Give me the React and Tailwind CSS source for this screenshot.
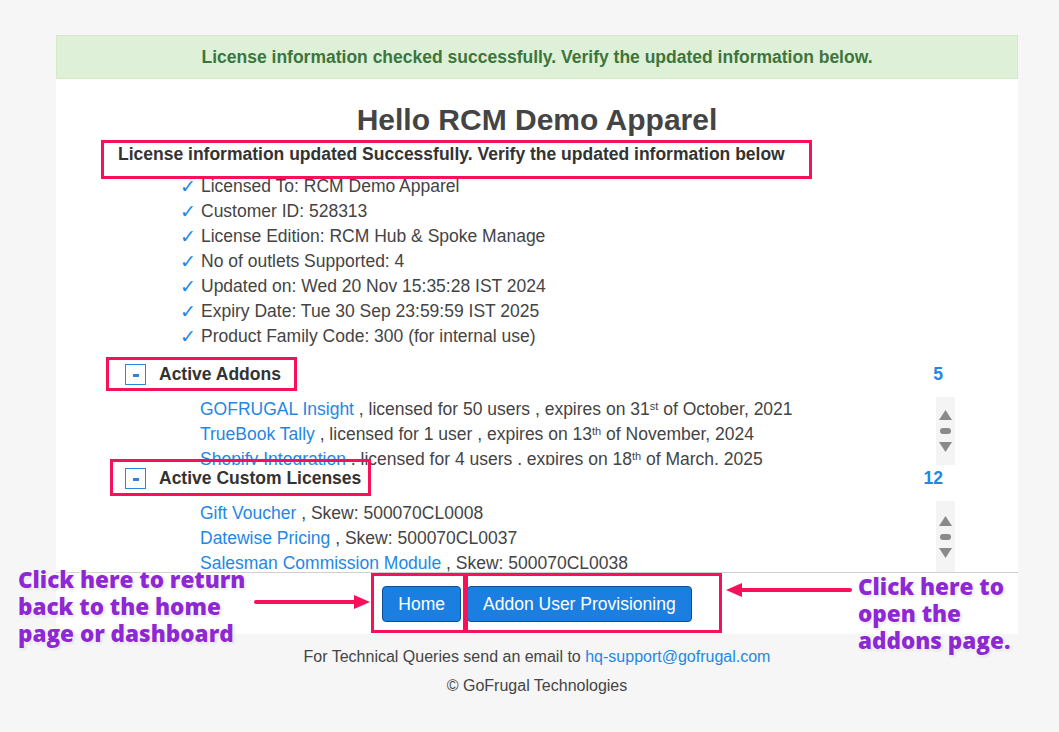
import React from "react";

const details = [
  "Licensed To: RCM Demo Apparel",
  "Customer ID: 528313",
  "License Edition: RCM Hub & Spoke Manage",
  "No of outlets Supported: 4",
  "Updated on: Wed 20 Nov 15:35:28 IST 2024",
  "Expiry Date: Tue 30 Sep 23:59:59 IST 2025",
  "Product Family Code: 300 (for internal use)",
];

const addons = [
  { name: "GOFRUGAL Insight", users: "50 users", day: "31", sup: "st", rest: "of October, 2021" },
  { name: "TrueBook Tally", users: "1 user", day: "13", sup: "th", rest: "of November, 2024" },
  { name: "Shopify Integration", users: "4 users", day: "18", sup: "th", rest: "of March, 2025" },
  { name: "WhatsApp Integration", users: "4 users", day: "18", sup: "th", rest: "of March, 2025" },
  { name: "Loyalty Manager", users: "4 users", day: "18", sup: "th", rest: "of March, 2025" },
];

const customLicenses = [
  { name: "Gift Voucher", skew: "500070CL0008" },
  { name: "Datewise Pricing", skew: "500070CL0037" },
  { name: "Salesman Commission Module", skew: "500070CL0038" },
  { name: "Scheme Management", skew: "500070CL0041" },
];

function ScrollStub() {
  return (
    <div className="flex h-full w-[19px] flex-col items-center justify-center gap-[8px] bg-[#f4f4f4]">
      <svg width="13" height="10" viewBox="0 0 13 10">
        <path d="M6.5 0 L13 10 L0 10 Z" fill="#8a8a8a" />
      </svg>
      <div className="h-[6px] w-[11px] rounded-full bg-[#8a8a8a]" />
      <svg width="13" height="10" viewBox="0 0 13 10">
        <path d="M0 0 L13 0 L6.5 10 Z" fill="#8a8a8a" />
      </svg>
    </div>
  );
}

function SectionHeader({ title, count, className }) {
  return (
    <div className={`flex items-center justify-between pl-[69px] pr-[75px] ${className}`}>
      <div className="flex items-center gap-[13px]">
        <span className="flex h-[21px] w-[21px] items-center justify-center border border-[#2a86e0]">
          <span className="mt-[2px] h-[3px] w-[6px] bg-[#2a86e0]" />
        </span>
        <span className="text-[17.5px] font-bold text-[#333]">{title}</span>
      </div>
      <span className="text-[17.5px] font-bold text-[#1f87e5]">{count}</span>
    </div>
  );
}

export default function App() {
  return (
    <div
      className="relative min-h-screen bg-[#f6f6f6] pt-[35px] text-[#444]"
      style={{ fontFamily: '"Liberation Sans", Arial, sans-serif' }}
    >
      <div className="ml-[56px] w-[962px]">
        <div className="flex h-[44px] items-center justify-center border border-[#d6e9c6] bg-[#dff0d8] text-[17.5px] font-bold text-[#3c763d]">
          License information checked successfully. Verify the updated information below.
        </div>

        <div className="bg-white">
          <h1 className="pt-[24px] text-center text-[30px] font-bold leading-[34px] text-[#444]">
            Hello RCM Demo Apparel
          </h1>
          <p className="mt-[5px] pl-[62px] text-[17.5px] font-bold leading-[25px] text-[#333]">
            License information updated Successfully. Verify the updated information below
          </p>

          <ul className="mt-[7px] pl-[124px] text-[17.5px] leading-[25px]">
            {details.map((d) => (
              <li key={d} className="flex">
                <span
                  className="w-[21px] text-[#1f87e5]"
                  style={{ fontFamily: '"DejaVu Sans", sans-serif', fontSize: "19px" }}
                >
                  ✓
                </span>
                <span>{d}</span>
              </li>
            ))}
          </ul>

          <SectionHeader title="Active Addons" count="5" className="mt-[10px] h-[30px]" />
          <div className="mt-[8px] flex h-[68px] pr-[63px]">
            <div className="flex-1 overflow-hidden pl-[144px] text-[17.5px] leading-[25px]">
              {addons.map((a) => (
                <div key={a.name} className="whitespace-nowrap">
                  <span className="text-[#1f87e5]">{a.name}</span> , licensed for {a.users} , expires on {a.day}
                  <sup className="text-[11px]">{a.sup}</sup> {a.rest}
                </div>
              ))}
            </div>
            <ScrollStub />
          </div>

          <SectionHeader title="Active Custom Licenses" count="12" className="h-[26px]" />
          <div className="mt-[10px] flex h-[71px] pr-[63px]">
            <div className="flex-1 overflow-hidden pl-[144px] text-[17.5px] leading-[25px]">
              {customLicenses.map((c) => (
                <div key={c.name} className="whitespace-nowrap">
                  <span className="text-[#1f87e5]">{c.name}</span> , Skew: {c.skew}
                </div>
              ))}
            </div>
            <ScrollStub />
          </div>

          <div className="flex h-[62px] justify-center gap-[6px] border-t border-[#cfcfcf] pt-[13px]">
            <button className="h-[36px] rounded-[4px] border border-[#0f4f96] bg-[#1b7fe2] px-[15px] text-[17.5px] text-white">
              Home
            </button>
            <button className="h-[36px] rounded-[4px] border border-[#0f4f96] bg-[#1b7fe2] px-[15px] text-[17.5px] text-white">
              Addon User Provisioning
            </button>
          </div>
        </div>

        <div className="pb-[30px] pt-[13px] text-center text-[16px] leading-[20px] text-[#444]">
          <p>
            For Technical Queries send an email to{" "}
            <span className="text-[#1f87e5]">hq-support@gofrugal.com</span>
          </p>
          <p className="mt-[9px]">© GoFrugal Technologies</p>
        </div>
      </div>

      {/* annotation overlays */}
      <div className="pointer-events-none absolute left-[101px] top-[140px] h-[39px] w-[711px] border-[3px] border-[#f9105a]" />
      <div className="pointer-events-none absolute left-[106px] top-[357px] h-[34px] w-[191px] border-[3px] border-[#f9105a]" />
      <div className="pointer-events-none absolute left-[110px] top-[459px] h-[37px] w-[261px] border-[3px] border-[#f9105a]" />
      <div className="pointer-events-none absolute left-[371px] top-[573px] h-[60px] w-[95px] border-[3px] border-[#f9105a]" />
      <div className="pointer-events-none absolute left-[465px] top-[573px] h-[60px] w-[257px] border-[3px] border-[#f9105a]" />

      <svg className="pointer-events-none absolute left-[254px] top-[592px]" width="118" height="20" viewBox="0 0 118 20">
        <path d="M2 10 L104 10" stroke="#f9105a" strokeWidth="4" strokeLinecap="round" />
        <path d="M100 3 L116 10 L100 17 Z" fill="#f9105a" />
      </svg>
      <svg className="pointer-events-none absolute left-[724px] top-[580px]" width="128" height="20" viewBox="0 0 128 20">
        <path d="M126 10 L14 10" stroke="#f9105a" strokeWidth="4" strokeLinecap="round" />
        <path d="M18 3 L2 10 L18 17 Z" fill="#f9105a" />
      </svg>

      <div
        className="pointer-events-none absolute left-[18px] top-[566px] text-[22.5px] font-extrabold leading-[27px] text-[#8e28d4] [text-shadow:0_0_2px_#fff,0_0_3px_#fff,0_0_4px_#fff,1px_1px_3px_#bbb]"
        style={{ fontFamily: '"Open Sans", "Noto Sans", sans-serif' }}
      >
        Click here to return
        <br />
        back to the home
        <br />
        page or dashboard
      </div>
      <div
        className="pointer-events-none absolute left-[858px] top-[573px] text-[22.5px] font-extrabold leading-[27px] text-[#8e28d4] [text-shadow:0_0_2px_#fff,0_0_3px_#fff,0_0_4px_#fff,1px_1px_3px_#bbb]"
        style={{ fontFamily: '"Open Sans", "Noto Sans", sans-serif' }}
      >
        Click here to
        <br />
        open the
        <br />
        addons page.
      </div>
    </div>
  );
}
